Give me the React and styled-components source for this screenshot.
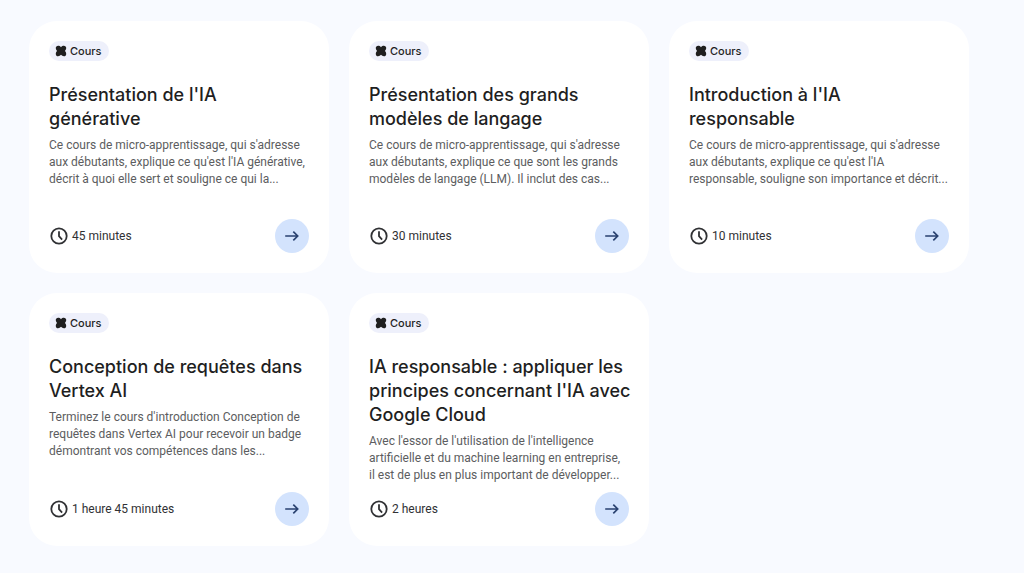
import React from 'react'
import styled, { createGlobalStyle } from 'styled-components'

const GlobalStyle = createGlobalStyle`
  * {
    box-sizing: border-box;
  }
  body {
    margin: 0;
    background: #f8faff;
    color: #1f1f1f;
    font-family: Roboto, 'Liberation Sans', sans-serif;
  }
`

const Catalog = styled.main`
  display: grid;
  grid-template-columns: repeat(3, minmax(0, 1fr));
  gap: 20px;
  padding: 21px 55px 27px 29px;
`

const Card = styled.article`
  display: flex;
  flex-direction: column;
  align-items: flex-start;
  min-height: 252px;
  padding: 20px;
  border-radius: 28px;
  background: #fff;
`

const Chip = styled.span`
  display: flex;
  align-items: center;
  gap: 3px;
  height: 20px;
  padding: 0 7px 0 6px;
  border-radius: 10px;
  background: #eef0fb;
  font-family: Inter, Roboto, sans-serif;
  font-size: 11px;
  font-weight: 500;
`

const Title = styled.h2`
  margin: 22px 0 6px;
  font-family: Inter, Roboto, sans-serif;
  font-size: 18px;
  font-weight: 500;
  line-height: 24px;
  white-space: pre;
`

const Description = styled.p`
  margin: 0 0 8px;
  color: #5c5d60;
  font-size: 12px;
  line-height: 17px;
  white-space: pre;
`

const CardFooter = styled.footer`
  display: flex;
  align-items: center;
  justify-content: space-between;
  width: 100%;
  margin-top: auto;
`

const Duration = styled.span`
  display: flex;
  align-items: center;
  gap: 3px;
  color: #303134;
  font-size: 12px;
`

const OpenButton = styled.button`
  display: flex;
  align-items: center;
  justify-content: center;
  width: 34px;
  height: 34px;
  padding: 0;
  border: 0;
  border-radius: 50%;
  background: #d3e3fd;
  color: #2a4270;
  cursor: pointer;
`

const CourseIcon = () => (
  <svg width="12" height="12" viewBox="0 0 12 12" fill="currentColor" aria-hidden="true">
    <path d="M.8 3.1C.8 1.7 1.8.8 3.1.8C4.3.8 5.2 1.3 6 2.2C6.8 1.3 7.7.8 8.9.8C10.2.8 11.2 1.7 11.2 3.1C11.2 4.3 10.7 5.2 9.9 6C10.7 6.8 11.2 7.7 11.2 8.9C11.2 10.3 10.2 11.2 8.9 11.2C7.7 11.2 6.8 10.7 6 9.8C5.2 10.7 4.3 11.2 3.1 11.2C1.8 11.2.8 10.3.8 8.9C.8 7.7 1.3 6.8 2.1 6C1.3 5.2.8 4.3.8 3.1Z" />
  </svg>
)

const ClockIcon = () => (
  <svg width="20" height="20" viewBox="0 0 20 20" fill="none" stroke="currentColor" strokeWidth="1.8" aria-hidden="true">
    <circle cx="10" cy="10" r="7.7" />
    <path d="M10 5.2V10.2L13.1 13.6" />
  </svg>
)

const ArrowIcon = () => (
  <svg width="16" height="16" viewBox="0 0 16 16" fill="none" stroke="currentColor" strokeWidth="1.7" aria-hidden="true">
    <path d="M1.2 8H13.8M9.3 3.6L13.7 8L9.3 12.4" />
  </svg>
)

const courses = [
  {
    title: "Présentation de l'IA\ngénérative",
    description:
      "Ce cours de micro-apprentissage, qui s'adresse\naux débutants, explique ce qu'est l'IA générative,\ndécrit à quoi elle sert et souligne ce qui la...",
    duration: '45 minutes',
  },
  {
    title: 'Présentation des grands\nmodèles de langage',
    description:
      "Ce cours de micro-apprentissage, qui s'adresse\naux débutants, explique ce que sont les grands\nmodèles de langage (LLM). Il inclut des cas...",
    duration: '30 minutes',
  },
  {
    title: "Introduction à l'IA\nresponsable",
    description:
      "Ce cours de micro-apprentissage, qui s'adresse\naux débutants, explique ce qu'est l'IA\nresponsable, souligne son importance et décrit...",
    duration: '10 minutes',
  },
  {
    title: 'Conception de requêtes dans\nVertex AI',
    description:
      "Terminez le cours d'introduction Conception de\nrequêtes dans Vertex AI pour recevoir un badge\ndémontrant vos compétences dans les...",
    duration: '1 heure 45 minutes',
  },
  {
    title: "IA responsable : appliquer les\nprincipes concernant l'IA avec\nGoogle Cloud",
    description:
      "Avec l'essor de l'utilisation de l'intelligence\nartificielle et du machine learning en entreprise,\nil est de plus en plus important de développer...",
    duration: '2 heures',
  },
]

const CourseCard = ({ title, description, duration }) => (
  <Card>
    <Chip>
      <CourseIcon />
      Cours
    </Chip>
    <Title>{title}</Title>
    <Description>{description}</Description>
    <CardFooter>
      <Duration>
        <ClockIcon />
        {duration}
      </Duration>
      <OpenButton type="button" aria-label={title}>
        <ArrowIcon />
      </OpenButton>
    </CardFooter>
  </Card>
)

const App = () => (
  <>
    <GlobalStyle />
    <Catalog>
      {courses.map(course => (
        <CourseCard key={course.title} {...course} />
      ))}
    </Catalog>
  </>
)

export default App
